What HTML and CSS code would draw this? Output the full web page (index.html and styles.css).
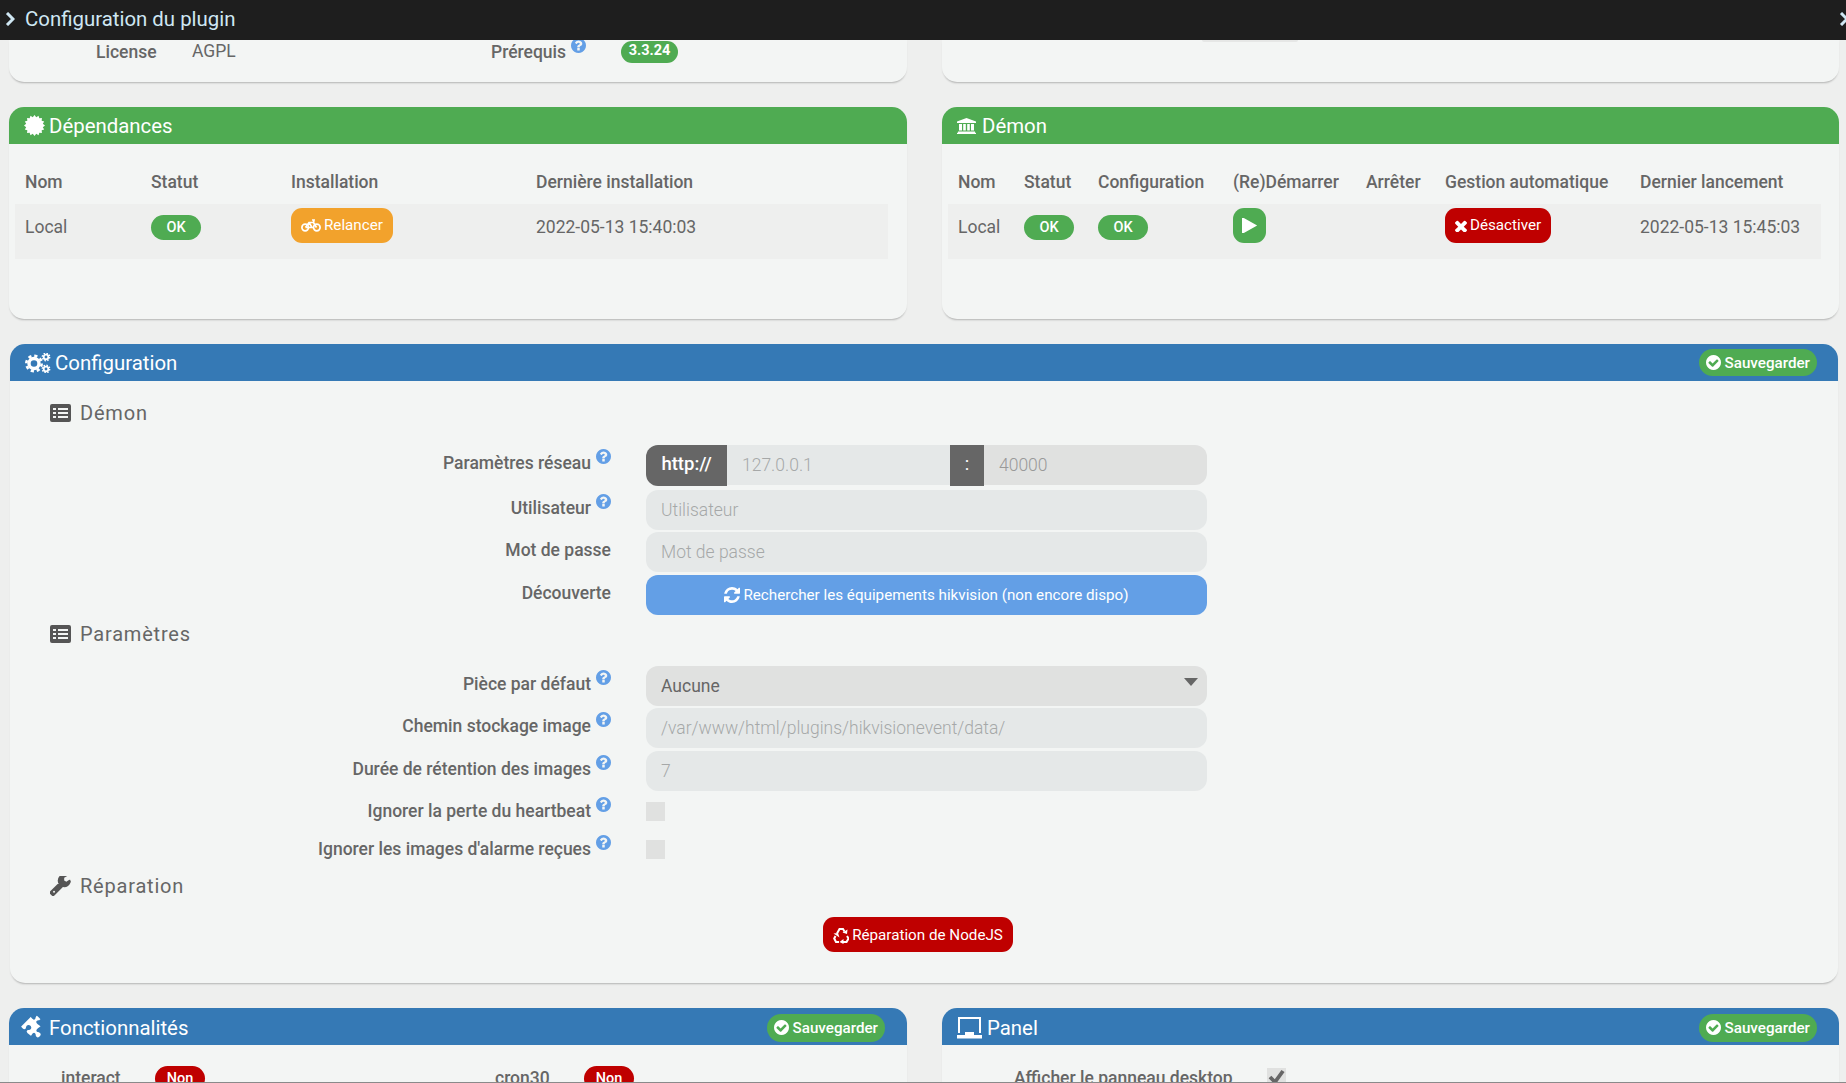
FILE: index.html
```html
<!DOCTYPE html>
<html lang="fr">
<head>
<meta charset="utf-8">
<title>Configuration du plugin</title>
<link rel="stylesheet" href="styles.css">
</head>
<body>
<svg class="defs" aria-hidden="true">
  <symbol id="i-help" viewBox="128 128 1536 1536"><path d="M1024 1376v-192q0-14-9-23t-23-9h-192q-14 0-23 9t-9 23v192q0 14 9 23t23 9h192q14 0 23-9t9-23zm256-672q0-88-55.500-163t-138.500-116-170-41q-243 0-371 213-15 24 8 42l132 100q7 6 19 6 16 0 25-12 53-68 86-92 34-24 86-24 48 0 85.500 26t37.500 59q0 38-20 61t-68 45q-63 28-115.500 86.500t-52.500 125.500v36q0 14 9 23t23 9h192q14 0 23-9t9-23q0-19 21.500-49.500t54.500-49.500q32-18 49-28.500t46-35 44.500-48 28-60.500 12.500-81zm384 192q0 209-103 385.500t-279.500 279.500-385.500 103-385.500-103-279.500-279.500-103-385.500 103-385.500 279.500-279.500 385.500-103 385.500 103 279.500 279.500 103 385.500z"/></symbol>
  <symbol id="i-check" viewBox="128 128 1536 1536"><path d="M1412 734q0-28-18-46l-91-90q-19-19-45-19t-45 19l-408 407-226-226q-19-19-45-19t-45 19l-91 90q-18 18-18 46 0 27 18 45l362 362q19 19 45 19 27 0 46-19l543-543q18-18 18-45zm252 162q0 209-103 385.500t-279.500 279.500-385.500 103-385.500-103-279.500-279.500-103-385.500 103-385.500 279.500-279.500 385.500-103 385.500 103 279.500 279.500 103 385.500z"/></symbol>
  <symbol id="i-list" viewBox="0 0 21 18"><path fill-rule="evenodd" d="M2 0h17a2 2 0 0 1 2 2v14a2 2 0 0 1-2 2H2a2 2 0 0 1-2-2V2a2 2 0 0 1 2-2zM3 4v2h3V4zm5 0v2h10V4zM3 8v2h3V8zm5 0v2h10V8zM3 12v2h3v-2zm5 0v2h10v-2z"/></symbol>
  <symbol id="i-chev" viewBox="0 0 10 14"><path d="M2 1l6 6-6 6" fill="none" stroke="currentColor" stroke-width="3"/></symbol>
</svg>

<div class="page">
  <header class="topbar">
    <svg class="chev"><use href="#i-chev"/></svg>
    <span class="topbar-title">Configuration du plugin</span>
    <svg class="chev chev-end"><use href="#i-chev"/></svg>
  </header>

  <main class="content">
    <div class="two">
      <section class="card card-top">
        <span class="meta-label lic">License</span>
        <span class="meta-value">AGPL</span>
        <span class="meta-label pre">Prérequis<svg class="help"><use href="#i-help"/></svg></span>
        <span class="badge ver">3.3.24</span>
      </section>
      <section class="card card-top">
        <span class="stub"></span>
      </section>
    </div>

    <div class="two">
      <section class="card card-status">
        <h2 class="head green">
          <svg class="ico ico-cert" viewBox="0 0 24 24"><polygon points="24,12 21.5,14 23.09,16.59 20.2,17.5 20.49,20.49 17.5,20.2 16.59,23.09 14,21.5 12,24 10,21.5 7.41,23.09 6.5,20.2 3.51,20.49 3.8,17.5 .91,16.59 2.5,14 0,12 2.5,10 .91,7.41 3.8,6.5 3.51,3.51 6.5,3.8 7.41,.91 10,2.5 12,0 14,2.5 16.59,.91 17.5,3.8 20.49,3.51 20.2,6.5 23.09,7.41 21.5,10"/></svg>
          <span>Dépendances</span>
        </h2>
        <table class="tbl tbl-dep">
          <thead><tr><th class="c1">Nom</th><th class="c2">Statut</th><th class="c3">Installation</th><th>Dernière installation</th></tr></thead>
          <tbody><tr>
            <td>Local</td>
            <td><span class="pill">OK</span></td>
            <td><span class="btn orange">
              <svg class="bike" viewBox="0 0 20 13"><g fill="none" stroke="#fff" stroke-width="1.7"><circle cx="4.200" cy="8.500" r="3.300"/><circle cx="15.800" cy="8.500" r="3.300"/><path d="M4.500 8.500L8 3.500h4.500l3 5M8 3.500l3 5H4.500M11 1h2l-.5 2.500"/></g></svg>Relancer</span></td>
            <td>2022-05-13 15:40:03</td>
          </tr></tbody>
        </table>
      </section>

      <section class="card card-status">
        <h2 class="head green">
          <svg class="ico ico-bank" viewBox="0 0 19 16"><path d="M9.500 0L19 3.500V5H0V3.500zM2 6h3v6.500H2zM6.200 6h2.600v6.500H6.200zM10.200 6h2.600v6.500h-2.600zM14 6h3v6.500h-3zM1 13.500h17V14.800h1V16H0v-1.200h1z"/></svg>
          <span>Démon</span>
        </h2>
        <table class="tbl tbl-dem">
          <thead><tr><th class="d1">Nom</th><th class="d2">Statut</th><th class="d3">Configuration</th><th class="d4">(Re)Démarrer</th><th class="d5">Arrêter</th><th class="d6">Gestion automatique</th><th>Dernier lancement</th></tr></thead>
          <tbody><tr>
            <td>Local</td>
            <td><span class="pill">OK</span></td>
            <td><span class="pill">OK</span></td>
            <td><span class="btn play"><svg class="play-ico" viewBox="192 192 1408 1408"><path d="M1576 927l-1328 738q-23 13-39.500 3t-16.500-36v-1472q0-26 16.500-36t39.500 3l1328 738q23 13 23 31t-23 31z"/></svg></span></td>
            <td></td>
            <td><span class="btn red"><svg class="x-ico" viewBox="300 300 1192 1192"><path d="M1490 1322q0 40-28 68l-136 136q-28 28-68 28t-68-28l-294-294-294 294q-28 28-68 28t-68-28l-136-136q-28-28-28-68t28-68l294-294-294-294q-28-28-28-68t28-68l136-136q28-28 68-28t68 28l294 294 294-294q28-28 68-28t68 28l136 136q28 28 28 68t-28 68l-294 294 294 294q28 28 28 68z"/></svg>Désactiver</span></td>
            <td>2022-05-13 15:45:03</td>
          </tr></tbody>
        </table>
      </section>
    </div>

    <section class="card card-config">
      <h2 class="head blue">
        <svg class="ico ico-cogs" viewBox="0 0 26 20">
          <circle cx="9" cy="10.500" r="5" fill="none" stroke="#fff" stroke-width="3.400"/>
          <circle cx="9" cy="10.500" r="7.700" fill="none" stroke="#fff" stroke-width="2.600" stroke-dasharray="3.200 2.850"/>
          <circle cx="21" cy="4" r="2.300" fill="none" stroke="#fff" stroke-width="1.800"/>
          <circle cx="21" cy="4" r="3.700" fill="none" stroke="#fff" stroke-width="1.400" stroke-dasharray="1.500 1.400"/>
          <circle cx="21" cy="16" r="2.300" fill="none" stroke="#fff" stroke-width="1.800"/>
          <circle cx="21" cy="16" r="3.700" fill="none" stroke="#fff" stroke-width="1.400" stroke-dasharray="1.500 1.400"/>
        </svg>
        <span>Configuration</span>
        <span class="save"><svg class="save-ico"><use href="#i-check"/></svg>Sauvegarder</span>
      </h2>

      <div class="config-body">
        <h3 class="section first"><svg class="sec-ico"><use href="#i-list"/></svg><span>Démon</span></h3>

        <div class="form-row wide">
          <label class="lab">Paramètres réseau<svg class="help"><use href="#i-help"/></svg></label>
          <div class="group">
            <span class="addon addon-a">http://</span>
            <input class="field field-a" placeholder="127.0.0.1">
            <span class="addon addon-b">:</span>
            <input class="field field-b" placeholder="40000">
          </div>
        </div>
        <div class="form-row tight">
          <label class="lab">Utilisateur<svg class="help"><use href="#i-help"/></svg></label>
          <input class="field full" placeholder="Utilisateur">
        </div>
        <div class="form-row">
          <label class="lab">Mot de passe</label>
          <input class="field full" placeholder="Mot de passe">
        </div>
        <div class="form-row">
          <label class="lab">Découverte</label>
          <button class="search" type="button"><svg class="btn-ico" viewBox="128 128 1536 1536"><path d="M1639 1056q0 5-1 7-64 268-268 434.500t-478 166.500q-146 0-282.500-55t-243.500-157l-129 129q-19 19-45 19t-45-19-19-45v-448q0-26 19-45t45-19h448q26 0 45 19t19 45-19 45l-137 137q71 66 161 102t187 36q134 0 250-65t186-179q11-17 53-117 8-23 30-23h192q13 0 22.500 9.500t9.500 22.500zm25-800v448q0 26-19 45t-45 19h-448q-26 0-45-19t-19-45 19-45l138-138q-148-137-349-137-134 0-250 65t-186 179q-11 17-53 117-8 23-30 23h-199q-13 0-22.500-9.500t-9.500-22.500v-7q65-268 270-434.500t480-166.500q146 0 284 55.500t245 156.500l130-129q19-19 45-19t45 19 19 45z"/></svg>Rechercher les équipements hikvision (non encore dispo)</button>
        </div>

        <h3 class="section second"><svg class="sec-ico"><use href="#i-list"/></svg><span>Paramètres</span></h3>

        <div class="form-row tight">
          <label class="lab">Pièce par défaut<svg class="help"><use href="#i-help"/></svg></label>
          <div class="select">Aucune</div>
        </div>
        <div class="form-row">
          <label class="lab">Chemin stockage image<svg class="help"><use href="#i-help"/></svg></label>
          <input class="field full" placeholder="/var/www/html/plugins/hikvisionevent/data/">
        </div>
        <div class="form-row flush">
          <label class="lab">Durée de rétention des images<svg class="help"><use href="#i-help"/></svg></label>
          <input class="field full" placeholder="7">
        </div>
        <div class="form-row check-row">
          <label class="lab">Ignorer la perte du heartbeat<svg class="help"><use href="#i-help"/></svg></label>
          <span class="box"></span>
        </div>
        <div class="form-row check-row">
          <label class="lab">Ignorer les images d'alarme reçues<svg class="help"><use href="#i-help"/></svg></label>
          <span class="box"></span>
        </div>

        <h3 class="section third">
          <svg class="sec-ico wrench" viewBox="0 0 1792 1792"><path d="M424 1344q0-33-23.500-56.500t-56.500-23.500-56.500 23.500-23.500 56.500 23.500 56.500 56.500 23.500 56.500-23.500 23.500-56.500zm805-525l-852 852q-46 46-113 46-66 0-114-46l-132-135q-47-45-47-113 0-67 47-114l850-850q49 123 144 218t218 144zm548-376q0 50-30 136-60 168-206.500 272.500t-322.500 104.500q-231 0-395.500-164.500t-164.500-395.500 164.500-395.500 395.500-164.500q72 0 151 21t134 57q20 14 20 34t-20 33l-293 169v224l193 107q5-3 79-48.500t135.500-81 70.500-35.500q19 0 30 12.500t11 32.500z"/></svg>
          <span>Réparation</span>
        </h3>
        <div class="repair">
          <span class="btn red"><svg class="rec-ico" viewBox="0 0 16 17"><g fill="none" stroke="#fff" stroke-width="2"><path d="M4 6.500L6.500 2h3.500l1.500 2.500"/><path d="M14 9l1.500 2.500-2 3.500H10"/><path d="M6 15H3l-1.800-3.500L2.500 9"/></g><path fill="#fff" d="M9.500 5.500l4.500 1.500.5-4.500zM10.500 12l-4 3 4 2zM.5 6.500l4.500-.5 1.500 4.500z"/></svg>Réparation de NodeJS</span>
        </div>
      </div>
    </section>

    <div class="two">
      <section class="card card-bottom">
        <h2 class="head blue head-low">
          <svg class="ico ico-puzzle" viewBox="128 128 1536 1536"><path d="M1664 1098q0 81-44.500 135t-123.500 54q-41 0-77.500-17.500t-59-38-56.500-38-71-17.500q-110 0-110 124 0 39 16 115t15 115v5q-22 0-33 1-34 3-97.500 11.500t-115.500 13.500-98 5q-61 0-103-26.500t-42-83.500q0-37 17.500-71t38-56.500 38-59 17.500-77.500q0-79-54-123.500t-135-44.500q-84 0-143 45.500t-59 127.500q0 43 15 83t33.500 64.500 33.500 53 15 50.500q0 45-46 89-37 35-117 35-95 0-245-24-9-2-27.500-4t-27.500-4l-13-2q-1 0-3-1-2 0-2-1v-1024q2 1 17.500 3.500t34 5 21.500 3.500q150 24 245 24 80 0 117-35 46-44 46-89 0-22-15-50.500t-33.500-53-33.500-64.500-15-83q0-82 59-127.500t144-45.500q80 0 134 44.500t54 123.500q0 41-17.500 77.500t-38 59-38 56.500-17.500 71q0 57 42 83.500t103 26.500q64 0 180-15t163-17v2q-1 2-3.500 17.500t-5 34-3.500 21.500q-24 150-24 245 0 80 35 117 44 46 89 46 22 0 50.500-15t53-33.500 64.500-33.500 83-15q82 0 127.500 59t45.500 143z"/></svg>
          <span>Fonctionnalités</span>
          <span class="save save-low"><svg class="save-ico"><use href="#i-check"/></svg>Sauvegarder</span>
        </h2>
        <div class="features">
          <span class="feat">interact</span><span class="pill pill-red">Non</span>
          <span class="feat">cron30</span><span class="pill pill-red">Non</span>
        </div>
      </section>
      <section class="card card-bottom">
        <h2 class="head blue head-low">
          <svg class="ico ico-panel" viewBox="0 0 25 22"><path fill="none" stroke="#fff" stroke-width="2" d="M2 16V1h21v15"/><path fill="#fff" d="M0 18h8v-3h9v3h8v3.500H0z"/></svg>
          <span>Panel</span>
          <span class="save save-low"><svg class="save-ico"><use href="#i-check"/></svg>Sauvegarder</span>
        </h2>
        <div class="panel-row">
          <span class="feat panel-label">Afficher le panneau desktop</span>
          <span class="box checked"><svg viewBox="0 0 19 19"><path d="M3 9l5 5 8-11" fill="none" stroke="#666" stroke-width="3.800"/></svg></span>
        </div>
      </section>
    </div>
  </main>
</div>
</body>
</html>
```

FILE: styles.css
```css
* { box-sizing: border-box; }
html, body { margin: 0; padding: 0; }
body {
  font-family: Roboto, "Liberation Sans", sans-serif;
  font-size: 17.5px;
  color: #666;
  background: #eeefee;
}
.defs { position: absolute; width: 0; height: 0; }
.page {
  height: 1083px;
  overflow: hidden;
  border-bottom: 1px solid #8a8a8a;
}

/* top bar */
.topbar {
  position: relative;
  z-index: 1;
  display: flex;
  align-items: center;
  height: 40px;
  padding: 0 0 2px 5px;
  background: #1e1e1e;
  color: #cfe7f3;
}
.chev { width: 10px; height: 14px; flex: none; }
.topbar-title { margin-left: 10px; font-size: 20.4px; }
.chev-end { margin-left: auto; margin-right: -3px; }

/* layout */
.content { padding: 0 7px 0 9px; }
.two {
  display: grid;
  grid-template-columns: 898px 897px;
  column-gap: 35px;
  margin-bottom: 25px;
}
.card {
  background: #f3f5f4;
  border-radius: 15px;
  box-shadow: 0 2px 2px -1px rgba(0, 0, 0, 0.25);
}
.card-top {
  display: flex;
  height: 42px;
  border-radius: 0 0 15px 15px;
  position: relative;
}
.card-status { height: 212px; }
.card-config { margin: 0 1px 25px 1px; height: 639px; }
.card-bottom { height: 90px; border-radius: 15px 15px 0 0; }

/* top card */
.meta-label, .meta-value { position: absolute; }
.lic { left: 87px; top: 2px; font-weight: 500; line-height: 20px; }
.meta-value { left: 183px; top: 1px; line-height: 20px; }
.pre { left: 482px; top: -5px; font-weight: 500; line-height: 35px; }
.badge {
  position: absolute;
  left: 612px;
  top: 1px;
  width: 57px;
  height: 22px;
  border-radius: 11px;
  background: #4fab52;
  color: #fff;
  font-size: 14.500px;
  font-weight: 700;
  line-height: 20px;
  text-align: center;
}
.stub {
  position: absolute;
  left: 260px;
  top: 0;
  width: 96px;
  height: 2px;
  background: #e6e7e6;
  border-radius: 0 0 4px 4px;
}

/* panel headers */
.head {
  display: flex;
  align-items: center;
  height: 37px;
  margin: 0;
  padding-left: 15px;
  border-radius: 15px 15px 0 0;
  color: #fff;
  font-size: 20.4px;
  font-weight: 400;
}
.head-low { padding-top: 2px; }
.green { background: #4fab52; }
.blue { background: #3579b5; }
.ico { flex: none; fill: #fff; margin-right: 4px; }
.ico-cert { width: 21px; height: 21px; }
.ico-bank { width: 19px; height: 16px; margin-right: 6px; }
.ico-cogs { width: 26px; height: 20px; margin-right: 4px; }
.ico-puzzle { width: 23px; height: 23px; margin: 0 3px 0 -1px; transform: rotate(45deg) scale(0.88); }
.ico-panel { width: 25px; height: 22px; margin-right: 5px; }

.save {
  display: flex;
  align-items: center;
  margin-left: auto;
  margin-right: 21px;
  height: 27px;
  padding: 0 7px;
  border-radius: 14px;
  background: #4fab52;
  color: #fff;
  font-size: 15.200px;
  font-weight: 500;
}
.save-low { height: 28px; margin-right: 22px; }
.save-ico { width: 15px; height: 15px; fill: #fff; margin-right: 4px; }

/* tables */
.tbl {
  border-collapse: collapse;
  table-layout: fixed;
  margin-top: 16px;
}
.tbl-dep { margin-left: 6px; width: 873px; }
.tbl-dem { margin-left: 6px; width: 873px; }
.tbl th {
  height: 44px;
  padding: 0 0 0 10px;
  text-align: left;
  font-weight: 500;
  white-space: nowrap;
}
.tbl td {
  height: 55px;
  padding: 4px 0 0 10px;
  vertical-align: top;
  line-height: 38px;
  background: #eeefee;
  white-space: nowrap;
}
.c1 { width: 126px; }
.c2 { width: 140px; }
.c3 { width: 245px; }
.d1 { width: 66px; }
.d2 { width: 74px; }
.d3 { width: 135px; }
.d4 { width: 133px; }
.d5 { width: 79px; }
.d6 { width: 195px; }

.pill {
  display: inline-block;
  width: 50px;
  height: 25px;
  margin-top: 7px;
  border-radius: 12.500px;
  background: #4fab52;
  color: #fff;
  font-size: 14.500px;
  font-weight: 500;
  line-height: 26px;
  text-align: center;
  vertical-align: top;
}
.pill-red { background: #bf0000; margin-top: 0; }

.btn {
  display: inline-flex;
  align-items: center;
  justify-content: center;
  height: 35px;
  padding: 0 10px;
  border-radius: 11px;
  color: #fff;
  font-size: 15.200px;
  line-height: 35px;
  vertical-align: top;
}
.orange { background: #f2a22c; }
.red { background: #bf0000; }
.play { width: 33px; padding: 0; background: #4fab52; }
.bike { width: 20px; height: 13px; margin-right: 3px; }
.play-ico { width: 15px; height: 15px; fill: #fff; }
.x-ico { width: 12px; height: 12px; fill: #fff; margin-right: 3px; }

/* config form */
.config-body { padding-top: 17px; }
.section {
  display: flex;
  align-items: center;
  height: 30px;
  margin: 0;
  padding-left: 40px;
  font-size: 20px;
  font-weight: 400;
  letter-spacing: 0.8px;
  color: #666;
}
.first { margin-bottom: 17px; }
.second { margin-top: 4px; margin-bottom: 17px; }
.third { margin-bottom: 16px; margin-top: 3px; }
.sec-ico { width: 21px; height: 18px; fill: #555; margin-right: 9px; flex: none; }
.wrench { height: 21px; width: 21px; }

.form-row {
  display: flex;
  column-gap: 35px;
  height: 40px;
  margin-bottom: 3px;
}
.wide { margin-bottom: 5px; }
.tight { margin-bottom: 2px; }
.flush { margin-bottom: 1px; }
.lab {
  width: 601px;
  flex: none;
  text-align: right;
  font-weight: 500;
  line-height: 37px;
  white-space: nowrap;
}
.help {
  width: 15px;
  height: 15px;
  margin-left: 5px;
  fill: #639fe6;
  vertical-align: 5px;
}
.group { display: flex; width: 561px; }
.addon {
  height: 41px;
  background: #666;
  color: #fff;
  font-size: 18.500px;
  font-weight: 500;
  line-height: 39px;
  text-align: center;
  flex: none;
}
.addon-a { width: 81px; border-radius: 12px 0 0 12px; }
.addon-b { width: 34px; font-weight: 400; }
.field {
  height: 40px;
  border: 0;
  outline: 0;
  padding: 0 15px;
  background: #e5e8e8;
  font: 300 17.500px Roboto, "Liberation Sans", sans-serif;
  color: #999;
}
.field::placeholder { color: #a6a8a8; opacity: 1; }
.field-a { width: 223px; }
.field-b { width: 223px; background: #e0e1e0; border-radius: 0 12px 12px 0; }
.field-b::placeholder { color: #999; }
.full { width: 561px; border-radius: 12px; }
.search {
  display: flex;
  align-items: center;
  justify-content: center;
  width: 561px;
  height: 40px;
  border: 0;
  border-radius: 12px;
  background: #639fe6;
  color: #fff;
  font: 400 15.200px Roboto, "Liberation Sans", sans-serif;
}
.btn-ico { width: 16px; height: 16px; fill: #fff; margin-right: 3px; }
.select {
  position: relative;
  width: 561px;
  height: 40px;
  padding-left: 15px;
  border-radius: 12px;
  background: #e0e1e0;
  line-height: 40px;
}
.select::after {
  content: "";
  position: absolute;
  right: 9px;
  top: 12px;
  border-left: 7.500px solid transparent;
  border-right: 7.500px solid transparent;
  border-top: 8px solid #666;
}
.check-row { height: 38px; margin: 0; align-items: center; }
.check-row .lab { line-height: 38px; }
.box {
  display: block;
  width: 19px;
  height: 19px;
  background: #e0e1e0;
}
.box svg { display: block; width: 19px; height: 19px; }
.repair { display: flex; justify-content: center; padding-right: 12px; }
.repair .btn { padding-top: 2px; }
.rec-ico { width: 16px; height: 17px; margin-right: 3px; }

/* bottom panels */
.features {
  display: grid;
  grid-template-columns: 94px 340px 89px 50px;
  padding: 21px 0 0 52px;
}
.feat { line-height: 25px; font-weight: 500; }
.panel-row {
  display: flex;
  padding: 23px 0 0 72px;
}
.panel-label { width: 253px; line-height: 20px; }
```
